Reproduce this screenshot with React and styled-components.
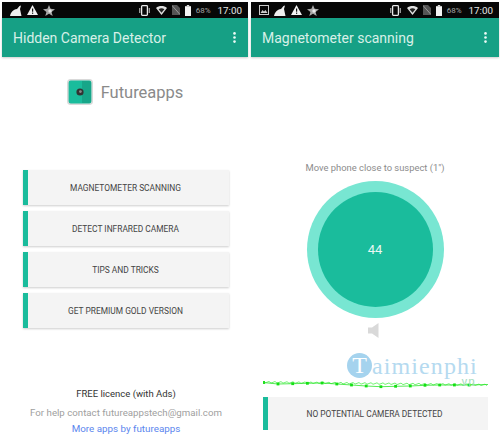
import React from "react";
import styled, { createGlobalStyle } from "styled-components";

const GlobalStyle = createGlobalStyle`
  html, body {
    margin: 0;
    padding: 0;
    background: #fff;
    font-family: Roboto, "Liberation Sans", sans-serif;
  }
`;

const markerHeights = [4, 3.7, 3.3, 3, 4, 5, 6, 6.7, 6.3, 6, 5.3, 5, 5, 5];
const markers = markerHeights.map((y, i) => [15 + 14.7 * i, y]);
const markerLine = [[0, 2.5], ...markers, [225, 4.5]];

// the jittery trace that runs above the markers
const noise = Array.from({ length: 113 }, (_, i) => {
  const x = i * 2;
  const base = x < 80 ? 2.2 + x * 0.012 : 3.2 + (x - 80) * 0.012;
  return [x, base + (i % 3 === 0 ? -0.8 : i % 3 === 1 ? 0.7 : 0)];
});

function BrushIcon() {
  return (
    <svg width="12" height="11" viewBox="0 0 12 11">
      <path d="M0 11 C1 7 3 4.5 7 4 L9.5 1 L11 0.5 L10 4 L11.5 11 Z" fill="#eee" />
    </svg>
  );
}

function WarningIcon() {
  return (
    <svg width="11" height="10" viewBox="0 0 11 10">
      <path d="M5.5 0 L11 10 H0 Z" fill="#f2f2f2" />
      <rect x="5" y="3.5" width="1.2" height="3.2" fill="#111" />
      <rect x="5" y="7.6" width="1.2" height="1.2" fill="#111" />
    </svg>
  );
}

function StarIcon() {
  return (
    <svg width="12" height="11" viewBox="0 0 12 11">
      <path d="M6 0 L7.6 3.8 L12 4.2 L8.6 7 L9.7 11 L6 8.8 L2.3 11 L3.4 7 L0 4.2 L4.4 3.8 Z" fill="#a8a8a8" />
      <circle cx="7" cy="6" r="1.7" fill="#e8e8e8" />
    </svg>
  );
}

function ImageIcon() {
  return (
    <svg width="10" height="10" viewBox="0 0 10 10">
      <rect x="0.5" y="0.5" width="9" height="9" fill="none" stroke="#ccc" />
      <path d="M1.5 8 L3.5 5 L5 6.5 L6.5 5 L8.5 8 Z" fill="#ccc" />
    </svg>
  );
}

function VibrateIcon() {
  return (
    <svg width="13" height="11" viewBox="0 0 13 11">
      <rect x="3.6" y="0.7" width="5.8" height="9.6" rx="0.8" fill="none" stroke="#e8e8e8" strokeWidth="1.3" />
      <rect x="1.2" y="3" width="1.1" height="5" fill="#bbb" />
      <rect x="10.7" y="3" width="1.1" height="5" fill="#bbb" />
    </svg>
  );
}

function WifiIcon() {
  return (
    <svg width="11" height="9" viewBox="0 0 11 9">
      <path d="M0 2 C3 -0.6 8 -0.6 11 2 L5.5 9 Z" fill="#e0e0e0" />
      <path d="M2.6 3.2 C4.3 2 6.7 2 8.4 3.2 L5.5 6.8 Z" fill="#222" />
    </svg>
  );
}

function NoSimIcon() {
  return (
    <svg width="8" height="10" viewBox="0 0 8 10">
      <path d="M0 0 H5 L8 3 V10 H0 Z" fill="#555" />
      <path d="M0 0.5 L8 9.5" stroke="#999" strokeWidth="1" />
    </svg>
  );
}

function BatteryIcon() {
  return (
    <svg width="6" height="11" viewBox="0 0 6 11">
      <rect x="1.8" y="0" width="2.4" height="1.2" fill="#ddd" />
      <rect x="0" y="1.2" width="6" height="9.8" fill="#f5f5f5" />
    </svg>
  );
}

function MoreIcon() {
  return (
    <svg width="3" height="11" viewBox="0 0 3 11">
      <circle cx="1.5" cy="1.4" r="1.3" fill="#eefaf6" />
      <circle cx="1.5" cy="5.5" r="1.3" fill="#eefaf6" />
      <circle cx="1.5" cy="9.6" r="1.3" fill="#eefaf6" />
    </svg>
  );
}

function SpeakerIcon() {
  return (
    <svg width="11" height="15" viewBox="0 0 11 15">
      <path d="M0 4.5 H4 L10.5 0 V15 L4 10.5 H0 Z" fill="#d9d9d9" />
    </svg>
  );
}

function AppIcon() {
  return (
    <svg width="26" height="26" viewBox="0 0 26 26">
      <rect x="0.8" y="0.8" width="24.4" height="24.4" rx="3" fill="#1abc9c" stroke="#d9d9d9" strokeWidth="1.6" />
      <path d="M15 2 H22 Q24 2 24 4 V22 Q24 24 22 24 H15 Z" fill="#17a689" />
      <circle cx="13" cy="13" r="3.6" fill="#333" />
      <circle cx="13.4" cy="12.6" r="1.4" fill="#8a8a8a" />
    </svg>
  );
}

function Graph() {
  const toLine = (pts) => pts.map((p) => p.join(",")).join(" ");
  return (
    <GraphBox width="225" height="12" viewBox="0 0 225 12">
      <polyline points={toLine(noise)} fill="none" stroke="#4cf04c" strokeWidth="0.8" />
      <polyline points={toLine(markerLine)} fill="none" stroke="#2be52b" strokeWidth="0.8" />
      <rect x="0" y="1" width="2" height="3" fill="#22e022" />
      {markers.map((p) => (
        <rect key={p[0]} x={p[0] - 1.4} y={p[1] - 1.4} width="2.8" height="2.8" fill="#14e014" />
      ))}
    </GraphBox>
  );
}

function StatusBar({ leftIcons }) {
  return (
    <StatusRow>
      <StatusGroup>{leftIcons}</StatusGroup>
      <StatusGroup $right>
        <VibrateIcon />
        <WifiIcon />
        <NoSimIcon />
        <BatteryIcon />
        <Percent>68%</Percent>
        <Clock>17:00</Clock>
      </StatusGroup>
    </StatusRow>
  );
}

function MenuButton({ children }) {
  return (
    <Card>
      <Accent />
      <CardLabel>{children}</CardLabel>
    </Card>
  );
}

export default function App() {
  return (
    <>
      <GlobalStyle />
      <Page>
        <Phone $width={246}>
          <StatusBar
            leftIcons={
              <>
                <BrushIcon />
                <WarningIcon />
                <StarIcon />
              </>
            }
          />
          <AppBar>
            <Title>Hidden Camera Detector</Title>
            <MoreIcon />
          </AppBar>
          <HomeBody>
            <Brand>
              <AppIcon />
              <BrandName>Futureapps</BrandName>
            </Brand>
            <Menu>
              <MenuButton>MAGNETOMETER SCANNING</MenuButton>
              <MenuButton>DETECT INFRARED CAMERA</MenuButton>
              <MenuButton>TIPS AND TRICKS</MenuButton>
              <MenuButton>GET PREMIUM GOLD VERSION</MenuButton>
            </Menu>
            <Footer>
              <Licence>FREE licence (with Ads)</Licence>
              <Help>For help contact futureappstech@gmail.com</Help>
              <MoreLink>More apps by futureapps</MoreLink>
            </Footer>
          </HomeBody>
        </Phone>
        <Phone $width={248}>
          <StatusBar
            leftIcons={
              <>
                <ImageIcon />
                <BrushIcon />
                <WarningIcon />
                <StarIcon />
              </>
            }
          />
          <AppBar>
            <Title>Magnetometer scanning</Title>
            <MoreIcon />
          </AppBar>
          <ScanBody>
            <Hint>Move phone close to suspect (1")</Hint>
            <OuterCircle>
              <InnerCircle>44</InnerCircle>
            </OuterCircle>
            <SpeakerWrap>
              <SpeakerIcon />
            </SpeakerWrap>
            <Graph />
            <ResultCard>
              <MenuButton>NO POTENTIAL CAMERA DETECTED</MenuButton>
            </ResultCard>
            <Watermark>
              <WatermarkBadge>T</WatermarkBadge>
              <WatermarkName>aimienphi</WatermarkName>
              <WatermarkTld>vn</WatermarkTld>
            </Watermark>
          </ScanBody>
        </Phone>
      </Page>
    </>
  );
}

const Page = styled.div`
  display: flex;
  gap: 3px;
  width: 500px;
  height: 443px;
  box-sizing: border-box;
  padding: 2px 1px 0 2px;
  overflow: hidden;
  background: #fff;
`;

const Phone = styled.div`
  display: flex;
  flex-direction: column;
  width: ${(p) => p.$width}px;
`;

const StatusRow = styled.div`
  display: flex;
  align-items: center;
  justify-content: space-between;
  height: 16px;
  padding: 0 6px;
  background: #070707;
`;

const StatusGroup = styled.div`
  display: flex;
  align-items: center;
  gap: 5px;
  padding-left: ${(p) => (p.$right ? "0" : "1.5px")};
`;

const Percent = styled.span`
  font-size: 8px;
  color: #a8a8a8;
`;

const Clock = styled.span`
  margin-left: 2px;
  font-size: 9.8px;
  color: #e8e8e8;
`;

const AppBar = styled.div`
  display: flex;
  align-items: center;
  justify-content: space-between;
  height: 39px;
  padding: 0 12px 0 11px;
  background: #16a085;
  box-shadow: 0 1px 2px rgba(0, 0, 0, 0.2);
`;

const Title = styled.div`
  font-size: 14px;
  color: #d8f0e8;
`;

const HomeBody = styled.div`
  display: flex;
  flex-direction: column;
  flex: 1;
  align-items: center;
  padding-left: 2px;
`;

const Brand = styled.div`
  display: flex;
  align-items: center;
  gap: 8px;
  margin-top: 22px;
  margin-right: 2px;
`;

const BrandName = styled.div`
  font-size: 16.5px;
  color: #8a8a8a;
`;

const Menu = styled.div`
  display: flex;
  flex-direction: column;
  gap: 6px;
  width: 206px;
  margin-top: 65px;
`;

const Card = styled.div`
  display: flex;
  width: 100%;
  height: 35px;
  background: #f4f4f4;
  box-shadow: 0 1px 2px rgba(0, 0, 0, 0.2);
`;

const Accent = styled.div`
  width: 5px;
  background: #1abc9c;
`;

const CardLabel = styled.div`
  display: flex;
  flex: 1;
  align-items: center;
  justify-content: center;
  padding-right: 6px;
  font-size: 8.4px;
  color: #444;
`;

const Footer = styled.div`
  display: flex;
  flex-direction: column;
  align-items: center;
  margin-top: 59px;
`;

const Licence = styled.div`
  font-size: 9.5px;
  line-height: 14px;
  color: #333;
`;

const Help = styled.div`
  margin-top: 5px;
  font-size: 9.7px;
  line-height: 14px;
  color: #a0a0a0;
`;

const MoreLink = styled.div`
  margin-top: 2px;
  font-size: 9.8px;
  line-height: 14px;
  color: #5b86ee;
`;

const ScanBody = styled.div`
  position: relative;
  display: flex;
  flex-direction: column;
  flex: 1;
  align-items: center;
`;

const Hint = styled.div`
  margin-top: 104px;
  font-size: 9.4px;
  line-height: 14px;
  color: #8c8c8c;
`;

const OuterCircle = styled.div`
  display: flex;
  align-items: center;
  justify-content: center;
  width: 137px;
  height: 137px;
  margin-top: 6px;
  border-radius: 50%;
  background: #78e6d2;
`;

const InnerCircle = styled.div`
  display: flex;
  align-items: center;
  justify-content: center;
  width: 115px;
  height: 115px;
  border-radius: 50%;
  font-size: 13px;
  color: #e9f8f4;
  background: #1abc9c;
`;

const SpeakerWrap = styled.div`
  display: flex;
  margin-top: 5px;
  margin-right: 3px;
`;

const GraphBox = styled.svg`
  margin-top: 42px;
`;

const ResultCard = styled.div`
  width: 225px;
  margin-top: 5px;

  > div {
    height: 33px;
    box-shadow: none;
  }
`;

const Watermark = styled.div`
  position: absolute;
  top: 296px;
  left: 96px;
  display: flex;
  align-items: center;
  font-family: "Liberation Serif", serif;
  color: #b5daf0;
`;

const WatermarkBadge = styled.span`
  display: flex;
  align-items: center;
  justify-content: center;
  width: 25px;
  height: 25px;
  border-radius: 50%;
  font-size: 24px;
  color: #fff;
  background: #a5d3ee;
`;

const WatermarkName = styled.span`
  font-size: 24px;
  line-height: 24px;
  letter-spacing: 1.1px;
`;

const WatermarkTld = styled.span`
  position: absolute;
  top: 22px;
  right: 2px;
  font-family: Roboto, sans-serif;
  font-size: 12px;
  line-height: 14px;
  letter-spacing: 1px;
  color: #a8dcc0;
`;
